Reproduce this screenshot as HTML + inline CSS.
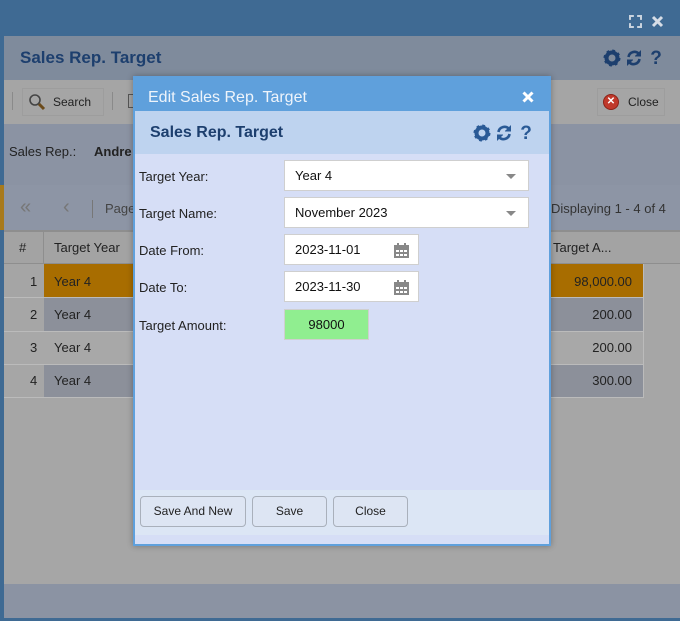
<!DOCTYPE html>
<html><head><meta charset="utf-8"><style>
*{box-sizing:border-box;margin:0;padding:0}
body{width:680px;height:621px;overflow:hidden;position:relative;background:#a6a6a6;font-family:"Liberation Sans",sans-serif;font-size:13px;color:#222}
.a{position:absolute;white-space:nowrap}
.inp{position:absolute;background:#fff;border:1px solid #cfcfcf;font-size:13px;padding-left:10px;line-height:29px;color:#111}
.lbl{position:absolute;left:139px;font-size:13px;color:#222}
.caret{position:absolute;right:12px;top:13px;width:0;height:0;border-left:5px solid transparent;border-right:5px solid transparent;border-top:5px solid #888}
.cal{position:absolute;right:9px;top:8px}
.btn{position:absolute;top:496px;height:31px;border:1px solid #a9b0bb;border-radius:4px;background:#dde5f3;font-size:12px;text-align:center;line-height:29px;color:#222}
.cell{position:absolute;font-size:13px;line-height:33px}
</style></head><body>
<svg width="0" height="0" style="position:absolute"><defs>
<g id="gear"><circle cx="9" cy="9" r="5.5" fill="none" stroke="currentColor" stroke-width="4"/><circle cx="9" cy="9" r="7" fill="none" stroke="currentColor" stroke-width="3" stroke-dasharray="2.6 2.9"/></g>
<g id="ref" fill="none" stroke="currentColor" stroke-width="2.6"><path d="M3.5 8 A6 6 0 0 1 14 5"/><path d="M14.5 10 A6 6 0 0 1 4 13"/><path d="M15.5 1.5 V7 H10" fill="currentColor" stroke-width="1"/><path d="M2.5 16.5 V11 H8" fill="currentColor" stroke-width="1"/></g>
<g id="q"><text x="9" y="16" text-anchor="middle" font-family="Liberation Sans" font-weight="bold" font-size="19" fill="currentColor">?</text></g>
</defs></svg>
<!-- outer frame -->
<div class="a" style="left:0;top:0;width:680px;height:36px;background:#3f6a93"></div>
<div class="a" style="left:0;top:0;width:4px;height:621px;background:#3f6a93"></div>
<div class="a" style="left:0;top:618px;width:680px;height:3px;background:#3f6a93"></div>
<div class="a" style="left:629px;top:15px;width:13px;height:13px;border:2px dashed #c9d3de"></div>
<svg class="a" style="left:651px;top:15px" width="13" height="13"><path d="M2 2L11 11M11 2L2 11" stroke="#d6dde6" stroke-width="3"/></svg>
<!-- header -->
<div class="a" style="left:4px;top:36px;width:676px;height:44px;background:#7f8b9c"></div>
<div class="a" style="left:20px;top:48px;font-size:17px;font-weight:bold;color:#1d3f6e">Sales Rep. Target</div>
<svg class="a" style="left:603px;top:49px;color:#1d3f6e" width="18" height="18"><use href="#gear"/></svg>
<svg class="a" style="left:625px;top:49px;color:#1d3f6e" width="18" height="18"><use href="#ref"/></svg>
<svg class="a" style="left:647px;top:48px;color:#1d3f6e" width="18" height="20"><use href="#q"/></svg>
<!-- toolbar -->
<div class="a" style="left:4px;top:80px;width:676px;height:44px;background:#a5a5a5"></div>
<div class="a" style="left:12px;top:92px;width:1px;height:18px;background:#8a8a8a"></div>
<div class="a" style="left:22px;top:88px;width:82px;height:28px;border:1px solid #9d9d9d"></div>
<svg class="a" style="left:28px;top:93px" width="18" height="18"><circle cx="7" cy="7" r="5" fill="none" stroke="#444" stroke-width="1.6"/><line x1="11" y1="11" x2="16" y2="16" stroke="#6b4a1a" stroke-width="3"/></svg>
<div class="a" style="left:53px;top:95px;font-size:12px;color:#222">Search</div>
<div class="a" style="left:112px;top:92px;width:1px;height:18px;background:#8a8a8a"></div>
<div class="a" style="left:128px;top:94px;width:6px;height:14px;border:1px solid #555;border-right:none"></div>
<div class="a" style="left:597px;top:88px;width:68px;height:28px;border:1px solid #9d9d9d"></div>
<div class="a" style="left:603px;top:94px;width:16px;height:16px;border-radius:50%;background:#c0392b;border:1px solid #8c2318;color:#fff;font-size:10px;text-align:center;line-height:14px;font-weight:bold">✕</div>
<div class="a" style="left:628px;top:95px;font-size:12px;color:#222">Close</div>
<!-- filter -->
<div class="a" style="left:4px;top:124px;width:676px;height:61px;background:#8b93a3"></div>
<div class="a" style="left:9px;top:144px;font-size:13px">Sales Rep.:</div>
<div class="a" style="left:94px;top:144px;font-size:13px;font-weight:bold">Andre</div>
<!-- pager -->
<div class="a" style="left:4px;top:185px;width:676px;height:45px;background:#8d95a5"></div>
<div class="a" style="left:0;top:185px;width:4px;height:45px;background:#a87a1c"></div>
<div class="a" style="left:20px;top:196px;font-size:20px;color:#777">«</div>
<div class="a" style="left:63px;top:196px;font-size:20px;color:#777">‹</div>
<div class="a" style="left:92px;top:200px;width:1px;height:18px;background:#777"></div>
<div class="a" style="left:105px;top:201px;font-size:13px;color:#444">Page</div>
<div class="a" style="left:551px;top:201px;font-size:13px;color:#333">Displaying 1 - 4 of 4</div>
<!-- grid header -->
<div class="a" style="left:4px;top:230px;width:676px;height:34px;background:#a3a3a3;border-top:2px solid #8e8e8e;border-bottom:1px solid #8e8e8e"></div>
<div class="a" style="left:43px;top:231px;width:1px;height:33px;background:#8e8e8e"></div>
<div class="a" style="left:19px;top:240px;font-size:13px">#</div>
<div class="a" style="left:54px;top:240px;font-size:13px">Target Year</div>
<div class="a" style="left:553px;top:240px;font-size:13px">Target A...</div>
<!-- rows -->
<div class="a" style="left:4px;top:264px;width:640px;height:33px;background:#a5a5a5"></div>
<div class="a" style="left:44px;top:264px;width:600px;height:33px;background:#a86d00"></div>
<div class="a" style="left:44px;top:298px;width:600px;height:33px;background:#8c909a"></div>
<div class="a" style="left:4px;top:331px;width:640px;height:33px;background:#a8a8a8"></div>
<div class="a" style="left:44px;top:365px;width:600px;height:33px;background:#8c909a"></div>
<div class="a" style="left:4px;top:297px;width:640px;height:1px;background:#bbb"></div>
<div class="a" style="left:4px;top:331px;width:640px;height:1px;background:#bbb"></div>
<div class="a" style="left:4px;top:364px;width:640px;height:1px;background:#bbb"></div>
<div class="a" style="left:4px;top:397px;width:640px;height:1px;background:#bbb"></div>
<div class="a" style="left:643px;top:264px;width:1px;height:134px;background:#bbb"></div>
<div class="cell" style="left:30px;top:265px">1</div><div class="cell" style="left:54px;top:265px">Year 4</div>
<div class="cell" style="left:30px;top:298px">2</div><div class="cell" style="left:54px;top:298px">Year 4</div>
<div class="cell" style="left:30px;top:331px">3</div><div class="cell" style="left:54px;top:331px">Year 4</div>
<div class="cell" style="left:30px;top:364px">4</div><div class="cell" style="left:54px;top:364px">Year 4</div>
<div class="cell" style="right:48px;top:265px">98,000.00</div>
<div class="cell" style="right:48px;top:298px">200.00</div>
<div class="cell" style="right:48px;top:331px">200.00</div>
<div class="cell" style="right:48px;top:364px">300.00</div>
<!-- bottom band -->
<div class="a" style="left:4px;top:584px;width:676px;height:34px;background:#8b93a3"></div>
<!-- dialog -->
<div class="a" style="left:133px;top:76px;width:418px;height:470px;background:#d6def6;border:2px solid #5fa0dc;box-shadow:0 0 6px rgba(0,0,0,.3)"></div>
<div class="a" style="left:133px;top:76px;width:418px;height:35px;background:#5fa0dc"></div>
<div class="a" style="left:148px;top:89px;font-size:16px;color:#eef4fb">Edit Sales Rep. Target</div>
<svg class="a" style="left:522px;top:91px" width="12" height="12"><path d="M1.5 1.5L10.5 10.5M10.5 1.5L1.5 10.5" stroke="#fff" stroke-width="3"/></svg>
<div class="a" style="left:135px;top:111px;width:414px;height:43px;background:#bed3ef"></div>
<div class="a" style="left:150px;top:124px;font-size:16px;font-weight:bold;color:#1d3f6e">Sales Rep. Target</div>
<svg class="a" style="left:473px;top:124px;color:#2a5a96" width="18" height="18"><use href="#gear"/></svg>
<svg class="a" style="left:495px;top:124px;color:#2a5a96" width="18" height="18"><use href="#ref"/></svg>
<svg class="a" style="left:517px;top:123px;color:#2a5a96" width="18" height="20"><use href="#q"/></svg>
<div class="lbl" style="top:169px">Target Year:</div>
<div class="lbl" style="top:206px">Target Name:</div>
<div class="lbl" style="top:243px">Date From:</div>
<div class="lbl" style="top:280px">Date To:</div>
<div class="lbl" style="top:318px">Target Amount:</div>
<div class="inp" style="left:284px;top:160px;width:245px;height:31px">Year 4<div class="caret"></div></div>
<div class="inp" style="left:284px;top:197px;width:245px;height:31px">November 2023<div class="caret"></div></div>
<div class="inp" style="left:284px;top:234px;width:135px;height:31px">2023-11-01<svg class="cal" width="15" height="15"><rect x="0" y="2" width="15" height="13" fill="#888"/><rect x="3" y="0" width="2" height="4" fill="#888"/><rect x="10" y="0" width="2" height="4" fill="#888"/><g fill="#fff"><rect x="2" y="7" width="3" height="2"/><rect x="6" y="7" width="3" height="2"/><rect x="10" y="7" width="3" height="2"/><rect x="2" y="11" width="3" height="2"/><rect x="6" y="11" width="3" height="2"/><rect x="10" y="11" width="3" height="2"/></g></svg></div>
<div class="inp" style="left:284px;top:271px;width:135px;height:31px">2023-11-30<svg class="cal" width="15" height="15"><rect x="0" y="2" width="15" height="13" fill="#888"/><rect x="3" y="0" width="2" height="4" fill="#888"/><rect x="10" y="0" width="2" height="4" fill="#888"/><g fill="#fff"><rect x="2" y="7" width="3" height="2"/><rect x="6" y="7" width="3" height="2"/><rect x="10" y="7" width="3" height="2"/><rect x="2" y="11" width="3" height="2"/><rect x="6" y="11" width="3" height="2"/><rect x="10" y="11" width="3" height="2"/></g></svg></div>
<div class="inp" style="left:284px;top:309px;width:85px;height:31px;background:#90ee90;padding:0;text-align:center">98000</div>
<div class="a" style="left:135px;top:490px;width:414px;height:45px;background:#dce6f5"></div>
<div class="btn" style="left:140px;width:106px">Save And New</div>
<div class="btn" style="left:252px;width:75px">Save</div>
<div class="btn" style="left:333px;width:75px">Close</div>
</body></html>
